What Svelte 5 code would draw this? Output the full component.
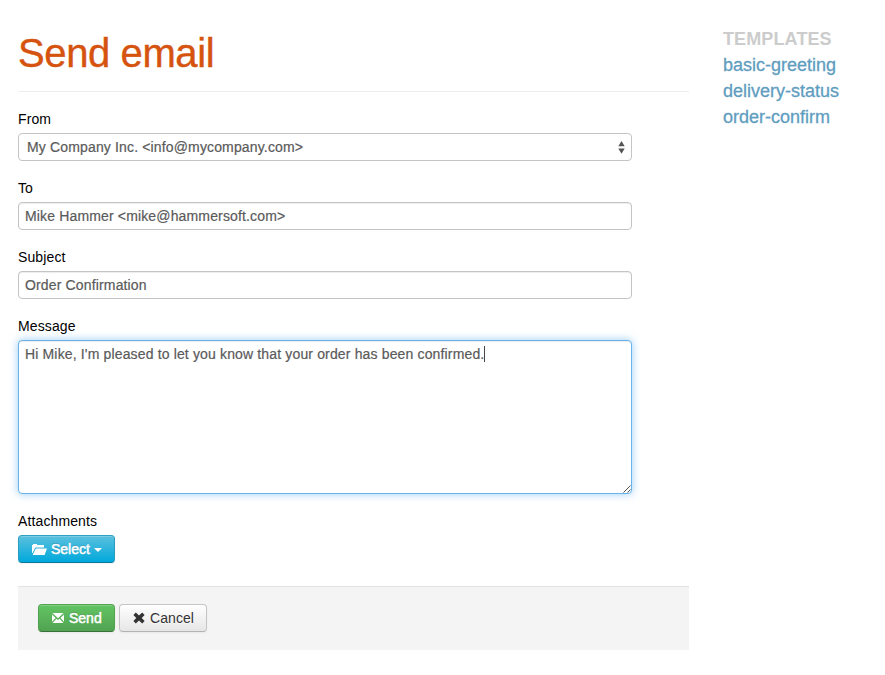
<script>
  const templates = ['basic-greeting', 'delivery-status', 'order-confirm'];
  const fields = [
    { id: 'to', label: 'To', value: 'Mike Hammer <mike@hammersoft.com>' },
    { id: 'subject', label: 'Subject', value: 'Order Confirmation' }
  ];
  const message = "Hi Mike, I'm pleased to let you know that your order has been confirmed.";
</script>

<div class="page">
  <main>
    <h1><span>Send email</span></h1>
    <div class="group">
      <label for="from">From</label>
      <div id="from" class="control select">
        <span>My Company Inc. &lt;info@mycompany.com&gt;</span>
        <svg width="7" height="13" viewBox="0 0 7 13"><path d="M3.5 0L6.7 5.2H.3zM3.5 12.7L6.7 7.5H.3z" fill="#555" /></svg>
      </div>
    </div>
    {#each fields as field}
      <div class="group">
        <label for={field.id}>{field.label}</label>
        <input id={field.id} class="control" value={field.value} />
      </div>
    {/each}
    <div class="group">
      <label for="message">Message</label>
      <div id="message" class="control textarea">
        <span>{message}</span><i class="caret"></i>
        <svg class="grip" width="8" height="8" viewBox="0 0 8 8"><path d="M.5 7.5l7-7M4.5 7.5l3-3" stroke="#555" stroke-width="1" /></svg>
      </div>
    </div>
    <div class="group last">
      <label for="attach">Attachments</label>
      <button id="attach" class="btn info">
        <svg width="16" height="14" viewBox="0 0 16 14"><path d="M1 11V3h1V2h4v1h7v2.5H4.2L1.6 11zM4.8 6.5H16L13.6 13H1.6z" fill="#fff" /></svg>
        <span>Select</span>
        <i class="arrow"></i>
      </button>
    </div>
    <div class="actions">
      <button class="btn success">
        <svg width="14" height="14" viewBox="0 0 14 14"><path d="M1.5 2h11L7 7.2zM1 3.4l3.6 3.5L1 10.8zM13 3.4L9.4 6.9l3.6 3.9zM1.5 12l4-4.2L7 9.1l1.5-1.3 4 4.2z" fill="#fff" /></svg>
        <span>Send</span>
      </button>
      <button class="btn">
        <svg width="14" height="14" viewBox="0 0 14 14"><path d="M3.8 1.6L7 4.5l3.2-2.9L12.6 4 9.7 7l2.9 3-2.4 2.4L7 9.5l-3.2 2.9L1.4 10 4.3 7 1.4 4z" fill="#333" /></svg>
        <span>Cancel</span>
      </button>
    </div>
  </main>
  <aside>
    <h2><span>TEMPLATES</span></h2>
    {#each templates as name}
      <a href="#{name}">{name}</a>
    {/each}
  </aside>
</div>

<style>
  :global(body) {
    background: #fff;
  }
  .page {
    display: flex;
    gap: 34px;
    padding: 25px 18px 0;
    font: 14px/20px 'Liberation Sans', Arial, sans-serif;
    color: #000;
  }
  main {
    width: 671px;
    flex: none;
  }
  h1 {
    margin: 0 0 16px;
    height: 66px;
    border-bottom: 1px solid #eee;
    font-size: 40px;
    font-weight: 400;
    line-height: 57px;
    letter-spacing: -0.4px;
    color: #d5530f;
    -webkit-text-stroke: 0.4px #d5530f;
  }
  .group {
    margin-bottom: 16px;
  }
  .last {
    margin-bottom: 23px;
  }
  label {
    display: block;
    height: 20px;
    line-height: 23px;
    margin-bottom: 5px;
    letter-spacing: 0.12px;
  }
  .control {
    box-sizing: border-box;
    display: block;
    width: 614px;
    height: 28px;
    padding: 0 6px;
    border: 1px solid #c4c4c4;
    border-radius: 4px;
    box-shadow: inset 0 1px 1px rgba(0, 0, 0, 0.075);
    background: #fff;
    color: #5a5a5a;
    font: inherit;
    line-height: 26px;
    letter-spacing: 0.15px;
    -webkit-text-stroke: 0.2px #5a5a5a;
    outline: none;
  }
  .select {
    display: flex;
    align-items: center;
    justify-content: space-between;
    padding-left: 8px;
    box-shadow: none;
  }
  .textarea {
    position: relative;
    height: 154px;
    padding-top: 3px;
    line-height: 20px;
    border-color: #68b3ec;
    box-shadow: inset 0 1px 1px rgba(0, 0, 0, 0.075), 0 0 8px rgba(82, 168, 236, 0.6);
  }
  .caret {
    display: inline-block;
    width: 1px;
    height: 16px;
    vertical-align: -3px;
    background: #444;
  }
  .grip {
    position: absolute;
    right: 0;
    bottom: 0;
  }
  .btn {
    box-sizing: border-box;
    display: flex;
    align-items: center;
    height: 28px;
    padding: 0 12px;
    border: 1px solid #c5c5c5;
    border-bottom-color: #b3b3b3;
    border-radius: 4px;
    background: linear-gradient(#fff, #e6e6e6);
    box-shadow: inset 0 1px 0 rgba(255, 255, 255, 0.2), 0 1px 2px rgba(0, 0, 0, 0.05);
    color: #333;
    font: inherit;
    letter-spacing: 0.08px;
    gap: 4px;
    text-shadow: 0 1px 1px rgba(255, 255, 255, 0.75);
  }
  .info,
  .success {
    color: #fff;
    letter-spacing: 0;
    -webkit-text-stroke: 0.5px #fff;
    text-shadow: 0 -1px 0 rgba(0, 0, 0, 0.25);
  }
  .info {
    width: 97px;
    border-color: #2fa0bf #2a9dbd #08799a;
    background: linear-gradient(#5bc0de, #00a8dc);
  }
  .success {
    width: 77px;
    border-color: #51a351 #51a351 #387038;
    background: linear-gradient(#62c462, #51a351);
  }
  .arrow {
    border: 4px solid transparent;
    border-top-color: #fff;
    border-bottom: 0;
    margin-top: 2px;
  }
  .actions {
    box-sizing: border-box;
    display: flex;
    gap: 4px;
    height: 64px;
    padding: 17px 20px;
    border-top: 1px solid #e2e2e2;
    background: #f4f4f4;
  }
  aside {
    font-size: 18px;
    line-height: 26px;
  }
  h2 {
    margin: 0;
    font-size: 18px;
    line-height: 29px;
    height: 27px;
    letter-spacing: 0.12px;
    color: #ccc;
  }
  a {
    display: block;
    color: #5f9dbf;
    text-decoration: none;
    -webkit-text-stroke: 0.3px #5f9dbf;
  }
</style>
